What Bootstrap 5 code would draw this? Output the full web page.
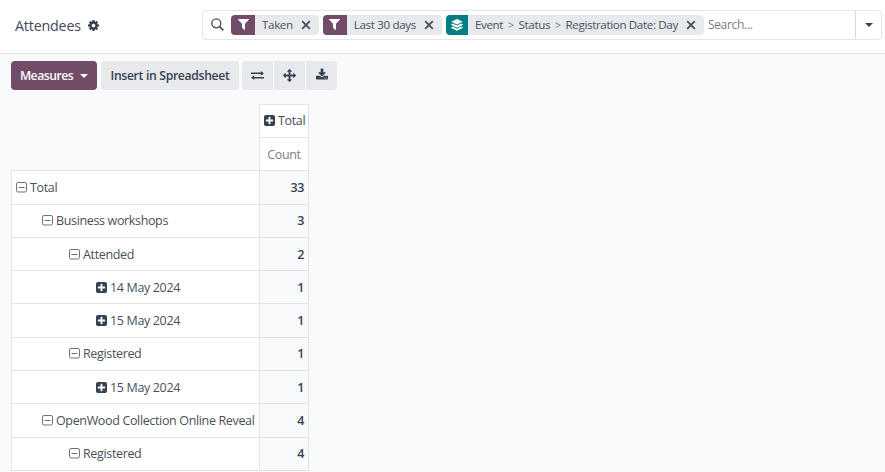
<!DOCTYPE html>
<html lang="en">
<head>
<meta charset="utf-8">
<meta name="viewport" content="width=device-width, initial-scale=1">
<title>Attendees</title>
<link href="https://cdn.jsdelivr.net/npm/bootstrap@5.3.0/dist/css/bootstrap.min.css" rel="stylesheet">
<style>
body{font-family:"Open Sans","Noto Sans",sans-serif;font-size:12.5px;letter-spacing:-.35px;line-height:18px;color:#495057;background:#f9fafb;height:472px;overflow:hidden}
svg{display:block;flex:none;fill:currentColor}
.control-bar{height:54px;background:#fff;border-bottom:1px solid #e2e4e8;padding:0 3px 4px 15px}
.page-title{width:187px;font-size:14.3px;letter-spacing:-.2px;gap:7px;color:#43495a;padding-top:2px}
.title-cog{color:#374151}
.search-box{height:30px;border:1px solid #e3e5e9;border-radius:4px;background:#fff;padding-left:8px}
.search-glass{margin-right:7px}
.facet{height:20px;border-radius:4px;background:#e7e9ed;overflow:hidden;margin-right:4px;font-size:11.6px;color:#4a5061}
.facet-icon{width:24px;height:20px;background:#714b67;color:#fff}
.facet-group{width:22px;background:#017e84}
.facet-label{padding-left:7px;white-space:pre}
.facet-sep{padding:0 2.2px;font-size:10.5px;color:#747a88}
.facet-close{width:10px;height:10px;margin:0 8px}
.search-input{font-size:12.1px}
.search-input,.head-muted{color:#787d87}
.search-toggle{width:26px;border-left:1px solid #d8dadd;color:#374151}
.tool-row{padding:7px 11px 0;gap:4px}
.btn-tool{--bs-btn-padding-x:9px;--bs-btn-padding-y:0;--bs-btn-font-size:12.2px;--bs-btn-font-weight:600;--bs-btn-line-height:18px;--bs-btn-border-width:0;--bs-btn-border-radius:4px;height:29px;white-space:nowrap;background:#e7e9ed;color:#374151;display:flex;align-items:center;justify-content:center;letter-spacing:-.32px}
.btn-measures{width:86px;background:#714b67;color:#fff;gap:7px;letter-spacing:-.5px}
.btn-sheet{width:138px}
.tool-icons{gap:1px;margin-left:-1px}
.tool-icons .btn-tool{width:31px;padding:0}
.pivot{width:298px;margin:14px 0 0 11px;border-collapse:separate;border-spacing:0;table-layout:fixed}
.pivot td,.pivot th{height:33.3px;padding:1px 4px 0;border:0 solid #e1e3e7;border-width:0 1px 1px 0;font-weight:400;background:#fff;vertical-align:middle}
.pivot thead th{padding-top:0}
.pivot .head-muted{padding-top:1px}
.pivot .blank{background:transparent}
.pivot .top-cell{border-top-width:1px;height:34px}
.pivot tbody th{border-left-width:1px}
.pivot .no-base{border-bottom-width:0}
.pivot tbody td{background:#f9fafb;text-align:right;font-weight:600;color:#374151}
.cell-line{gap:3px;white-space:nowrap}
.lvl-1{padding-left:26px}.lvl-2{padding-left:53px}.lvl-3{padding-left:80px}
.fold-plus,.fold-minus{margin-bottom:1px}
.fold-plus{color:#374151}
.fold-minus{color:#6a7080}
</style>
</head>
<body>
<svg width="0" height="0" class="position-absolute">
<symbol id="cog" viewBox="128 128 1536 1536"><path d="M1152 896q0-106-75-181t-181-75-181 75-75 181 75 181 181 75 181-75 75-181zm512-109v222q0 12-8 23t-20 13l-185 28q-19 54-39 91 35 50 107 138 10 12 10 25t-9 23q-27 37-99 108t-94 71q-12 0-26-9l-138-108q-44 23-91 38-16 136-29 186-7 28-36 28h-222q-14 0-24.500-8.500t-11.500-21.500l-28-184q-49-16-90-37l-141 107q-10 9-25 9-14 0-25-11-126-114-165-168-7-10-7-23 0-12 8-23 15-21 51-66.500t54-70.500q-27-50-41-99l-183-27q-13-2-21-12.500t-8-23.500v-222q0-12 8-23t19-13l186-28q14-46 39-92-40-57-107-138-10-12-10-24 0-10 9-23 26-36 98.500-107.500t94.500-71.500q13 0 26 10l138 107q44-23 91-38 16-136 29-186 7-28 36-28h222q14 0 24.500 8.500t11.500 21.500l28 184q49 16 90 37l142-107q9-9 24-9 13 0 25 10 129 119 165 170 7 8 7 22 0 12-8 23-15 21-51 66.500t-54 70.500q26 50 41 98l183 28q13 2 21 12.500t8 23.500z"/></symbol>
<symbol id="filter" viewBox="190 256 1412 1408"><path d="M1595 295q17 41-14 70l-493 493v742q0 42-39 59-13 5-25 5-27 0-45-19l-256-256q-19-19-19-45v-486l-493-493q-31-29-14-70 17-39 59-39h1280q42 0 59 39z"/></symbol>
<symbol id="plus" viewBox="128 128 1536 1536"><path d="M1408 960v-128q0-26-19-45t-45-19h-320v-320q0-26-19-45t-45-19h-128q-26 0-45 19t-19 45v320h-320q-26 0-45 19t-19 45v128q0 26 19 45t45 19h320v320q0 26 19 45t45 19h128q26 0 45-19t19-45v-320h320q26 0 45-19t19-45zm256-544v960q0 119-84.500 203.500t-203.500 84.500h-960q-119 0-203.500-84.500t-84.500-203.500v-960q0-119 84.500-203.500t203.500-84.500h960q119 0 203.500 84.500t84.500 203.500z"/></symbol>
<symbol id="minus" viewBox="0 0 11 11"><rect x=".5" y=".5" width="10" height="9.500" rx="1.600" fill="none" stroke="currentColor"/><path d="M2.500 5h6v1h-6z"/></symbol>
<symbol id="close" viewBox="0 0 10 10"><path d="M1.200 1.200l7.600 7.600M8.800 1.200l-7.600 7.600" fill="none" stroke="currentColor" stroke-width="1.900"/></symbol>
<symbol id="layers" viewBox="0 0 12 12"><path d="M6 0l5.700 2.700L6 5.400.3 2.700zM.3 5.100l1.300-.6L6 6.600l4.400-2.100 1.300.6v.9L6 8.700.3 6zM.3 8.200l1.300-.6L6 9.700l4.400-2.100 1.300.6v.8L6 11.800.3 9z"/></symbol>
<symbol id="caret" viewBox="0 0 8 4"><path d="M0 0h8L4 4z"/></symbol>
</svg>

<header class="control-bar d-flex align-items-center">
  <div class="page-title d-flex align-items-center flex-shrink-0"><span>Attendees</span><svg width="11" height="11" class="title-cog"><use href="#cog"/></svg></div>
  <div class="search-box d-flex align-items-center flex-grow-1">
    <svg width="13" height="13" viewBox="0 0 13 13" class="search-glass"><g fill="none" stroke="#495057" stroke-width="1.350"><circle cx="5.300" cy="5.300" r="4.500"/><path d="M8.600 8.600l3.800 3.800" stroke-width="1.600"/></g></svg>
    <div class="facet d-flex align-items-center"><span class="facet-icon d-flex align-items-center justify-content-center"><svg width="11" height="11"><use href="#filter"/></svg></span><span class="facet-label">Taken</span><svg class="facet-close"><use href="#close"/></svg></div>
    <div class="facet d-flex align-items-center"><span class="facet-icon d-flex align-items-center justify-content-center"><svg width="11" height="11"><use href="#filter"/></svg></span><span class="facet-label">Last 30 days</span><svg class="facet-close"><use href="#close"/></svg></div>
    <div class="facet d-flex align-items-center"><span class="facet-icon facet-group d-flex align-items-center justify-content-center"><svg width="12" height="12"><use href="#layers"/></svg></span><span class="facet-label">Event <span class="facet-sep">&gt;</span> Status <span class="facet-sep">&gt;</span> Registration Date: Day</span><svg class="facet-close"><use href="#close"/></svg></div>
    <span class="search-input flex-grow-1">Search...</span>
    <span class="search-toggle h-100 d-flex align-items-center justify-content-center"><svg width="8" height="4"><use href="#caret"/></svg></span>
  </div>
</header>

<main>
  <div class="tool-row d-flex">
    <button class="btn btn-tool btn-measures">Measures<svg width="8" height="4"><use href="#caret"/></svg></button>
    <button class="btn btn-tool btn-sheet">Insert in Spreadsheet</button>
    <div class="tool-icons d-flex">
      <button class="btn btn-tool rounded-end-0" aria-label="Flip axis"><svg width="13" height="9" viewBox="0 0 13 9"><path d="M0 1.600h9.800V0L13 2.400 9.800 4.700V3.100H0zM13 5.900H3.200V4.300L0 6.600 3.200 9V7.400H13z"/></svg></button>
      <button class="btn btn-tool rounded-0" aria-label="Expand all"><svg width="13" height="13" viewBox="0 0 1792 1792"><path d="M1792 896q0 26-19 45l-256 256q-19 19-45 19t-45-19-19-45v-128h-384v384h128q26 0 45 19t19 45-19 45l-256 256q-19 19-45 19t-45-19l-256-256q-19-19-19-45t19-45 45-19h128v-384h-384v128q0 26-19 45t-45 19-45-19l-256-256q-19-19-19-45t19-45l256-256q19-19 45-19t45 19 19 45v128h384v-384h-128q-26 0-45-19t-19-45 19-45l256-256q19-19 45-19t45 19l256 256q19 19 19 45t-19 45-45 19h-128v384h384v-128q0-26 19-45t45-19 45 19l256 256q19 19 19 45z"/></svg></button>
      <button class="btn btn-tool rounded-start-0" aria-label="Download"><svg width="12" height="12" viewBox="64 0 1664 1536" class="mb-1"><path d="M1344 1344q0-26-19-45t-45-19-45 19-19 45 19 45 45 19 45-19 19-45zm256 0q0-26-19-45t-45-19-45 19-19 45 19 45 45 19 45-19 19-45zm128-224v320q0 40-28 68t-68 28h-1472q-40 0-68-28t-28-68v-320q0-40 28-68t68-28h465l135 136q58 56 136 56t136-56l136-136h464q40 0 68 28t28 68zm-325-569q17 41-14 70l-448 448q-18 19-45 19t-45-19l-448-448q-31-29-14-70 17-39 59-39h256v-448q0-26 19-45t45-19h256q26 0 45 19t19 45v448h256q42 0 59 39z"/></svg></button>
    </div>
  </div>

  <table class="pivot">
    <colgroup><col style="width:249px"><col style="width:49px"></colgroup>
    <thead>
      <tr><th class="blank no-base"></th><th class="top-cell"><div class="cell-line d-flex align-items-center"><svg class="fold-plus" width="11" height="11"><use href="#plus"/></svg>Total</div></th></tr>
      <tr><th class="blank"></th><th class="text-center head-muted">Count</th></tr>
    </thead>
    <tbody>
      <tr><th><div class="cell-line d-flex align-items-center"><svg class="fold-minus" width="11" height="11"><use href="#minus"/></svg>Total</div></th><td>33</td></tr>
      <tr><th><div class="cell-line lvl-1 d-flex align-items-center"><svg class="fold-minus" width="11" height="11"><use href="#minus"/></svg>Business workshops</div></th><td>3</td></tr>
      <tr><th><div class="cell-line lvl-2 d-flex align-items-center"><svg class="fold-minus" width="11" height="11"><use href="#minus"/></svg>Attended</div></th><td>2</td></tr>
      <tr><th><div class="cell-line lvl-3 d-flex align-items-center"><svg class="fold-plus" width="11" height="11"><use href="#plus"/></svg>14 May 2024</div></th><td>1</td></tr>
      <tr><th><div class="cell-line lvl-3 d-flex align-items-center"><svg class="fold-plus" width="11" height="11"><use href="#plus"/></svg>15 May 2024</div></th><td>1</td></tr>
      <tr><th><div class="cell-line lvl-2 d-flex align-items-center"><svg class="fold-minus" width="11" height="11"><use href="#minus"/></svg>Registered</div></th><td>1</td></tr>
      <tr><th><div class="cell-line lvl-3 d-flex align-items-center"><svg class="fold-plus" width="11" height="11"><use href="#plus"/></svg>15 May 2024</div></th><td>1</td></tr>
      <tr><th><div class="cell-line lvl-1 d-flex align-items-center"><svg class="fold-minus" width="11" height="11"><use href="#minus"/></svg>OpenWood Collection Online Reveal</div></th><td>4</td></tr>
      <tr><th><div class="cell-line lvl-2 d-flex align-items-center"><svg class="fold-minus" width="11" height="11"><use href="#minus"/></svg>Registered</div></th><td>4</td></tr>
    </tbody>
  </table>
</main>
<script src="https://cdn.jsdelivr.net/npm/bootstrap@5.3.0/dist/js/bootstrap.bundle.min.js"></script>
</body>
</html>
